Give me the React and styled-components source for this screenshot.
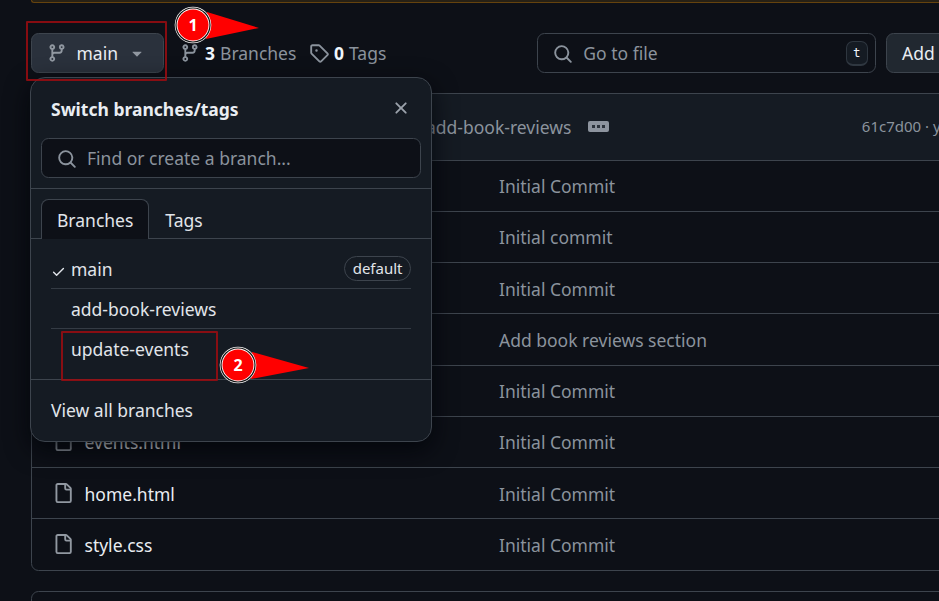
import React from "react";
import styled, { createGlobalStyle } from "styled-components";

const GlobalStyle = createGlobalStyle`
  * { box-sizing: border-box; }
  body {
    margin: 0;
    background: #0d1017;
    overflow: hidden;
  }
`;

const Page = styled.main`
  position: relative;
  width: 939px;
  height: 601px;
  overflow: hidden;
  padding-left: 31px;
  background: #0d1017;
  color: #e9edf2;
  font: 17.5px/26px "Noto Sans", sans-serif;
  white-space: nowrap;
  svg { display: block; flex: none; }
`;

const iconPaths = {
  branch:
    "M9.5 3.25a2.25 2.25 0 1 1 3 2.122V6A2.5 2.5 0 0 1 10 8.5H6a1 1 0 0 0-1 1v1.128a2.251 2.251 0 1 1-1.5 0V5.372a2.25 2.25 0 1 1 1.5 0v1.836A2.493 2.493 0 0 1 6 7h4a1 1 0 0 0 1-1v-.628A2.25 2.25 0 0 1 9.5 3.25Zm-6 0a.75.75 0 1 0 1.5 0 .75.75 0 0 0-1.5 0Zm8.25-.75a.75.75 0 1 0 0 1.5.75.75 0 0 0 0-1.5ZM4.25 12a.75.75 0 1 0 0 1.5.75.75 0 0 0 0-1.5Z",
  search:
    "M10.68 11.74a6 6 0 0 1-7.922-8.982 6 6 0 0 1 8.982 7.922l3.04 3.04a.749.749 0 0 1-.326 1.275.749.749 0 0 1-.734-.215ZM11.5 7a4.499 4.499 0 1 0-8.997 0A4.499 4.499 0 0 0 11.5 7Z",
  tag: "M1 7.775V2.75C1 1.784 1.784 1 2.75 1h5.025c.464 0 .91.184 1.238.513l6.25 6.25a1.75 1.75 0 0 1 0 2.474l-5.026 5.026a1.75 1.75 0 0 1-2.474 0l-6.25-6.25A1.752 1.752 0 0 1 1 7.775Zm1.5 0c0 .066.026.13.073.177l6.25 6.25a.25.25 0 0 0 .354 0l5.025-5.025a.25.25 0 0 0 0-.354l-6.25-6.25a.25.25 0 0 0-.177-.073H2.75a.25.25 0 0 0-.25.25ZM6 5a1 1 0 1 1 0 2 1 1 0 0 1 0-2Z",
  file: "M2 1.75C2 .784 2.784 0 3.75 0h6.586c.464 0 .909.184 1.237.513l2.914 2.914c.329.328.513.773.513 1.237v9.586A1.75 1.75 0 0 1 13.25 16h-9.5A1.75 1.75 0 0 1 2 14.25Zm1.75-.25a.25.25 0 0 0-.25.25v12.5c0 .138.112.25.25.25h9.5a.25.25 0 0 0 .25-.25V6h-2.75A1.75 1.75 0 0 1 9 4.25V1.5Zm6.75.062V4.25c0 .138.112.25.25.25h2.688l-.011-.013-2.914-2.914-.013-.011Z",
  close:
    "M3.72 3.72a.75.75 0 0 1 1.06 0L8 6.94l3.22-3.22a.749.749 0 0 1 1.275.326.749.749 0 0 1-.215.734L9.06 8l3.22 3.22a.749.749 0 0 1-.326 1.275.749.749 0 0 1-.734-.215L8 9.06l-3.22 3.22a.751.751 0 0 1-1.042-.018.751.751 0 0 1-.018-1.042L6.94 8 3.72 4.78a.75.75 0 0 1 0-1.06Z",
  check:
    "M13.78 4.22a.75.75 0 0 1 0 1.06l-7.25 7.25a.75.75 0 0 1-1.06 0L2.22 9.28a.751.751 0 0 1 .018-1.042.751.751 0 0 1 1.042-.018L6 10.94l6.72-6.72a.75.75 0 0 1 1.06 0Z",
  caret:
    "m4.427 7.427 3.396 3.396a.25.25 0 0 0 .354 0l3.396-3.396A.25.25 0 0 0 11.396 7H4.604a.25.25 0 0 0-.177.427Z",
};

function Icon({ name, size = 20 }) {
  return (
    <svg width={size} height={size} viewBox="0 0 16 16" fill="currentColor" aria-hidden="true">
      <path d={iconPaths[name]} />
    </svg>
  );
}

const Banner = styled.div`
  height: 3px;
  background: #272115;
  border: 1px solid #65430e;
  border-top: 0;
  border-right: 0;
  border-bottom-left-radius: 7px;
`;

const Toolbar = styled.div`
  position: relative;
  display: flex;
  align-items: center;
  height: 40px;
  margin-top: 30px;
`;

const Button = styled.button`
  display: flex;
  align-items: center;
  flex: none;
  width: ${(p) => p.$width}px;
  height: 40px;
  margin-left: ${(p) => p.$left || 0}px;
  padding: 0 0 1px 15px;
  border: 1px solid #3d444d;
  border-radius: 7.5px;
  background: ${(p) => (p.$active ? "#2a313c" : "#212830")};
  color: #e9edf2;
  font: inherit;
  text-align: left;
  svg { color: #9198a1; margin-top: 1px; }
`;

const ButtonLabel = styled.span`
  width: 50.5px;
  margin-left: 9.5px;
`;

const Counter = styled.a`
  display: flex;
  align-items: center;
  flex: none;
  width: ${(p) => p.$width}px;
  margin: -1px 0 0 ${(p) => p.$gap}px;
  color: #8b939d;
  b {
    margin: 0 5px;
    color: #f0f6fc;
    font-weight: 700;
  }
`;

const SearchField = styled.div`
  display: flex;
  align-items: center;
  gap: 10px;
  flex: none;
  width: ${(p) => p.$width}px;
  height: 40px;
  margin-left: ${(p) => p.$left}px;
  padding: 0 7px 1px 15px;
  border: 1px solid #3d444d;
  border-radius: 7.5px;
  background: #0d1017;
  color: #8b939d;
  svg { margin-top: 2px; }
`;

const KeyHint = styled.kbd`
  display: grid;
  place-items: center;
  width: 22px;
  height: 25px;
  margin: 2px 0 0 auto;
  border: 1px solid #2f3740;
  border-bottom-width: 2px;
  border-radius: 7px;
  background: #151b23;
  color: #f0f6fc;
  font: 12.5px/12px "DejaVu Sans Mono", monospace;
`;

const FileTable = styled.section`
  width: 1100px;
  height: 478px;
  margin-top: 20px;
  border: 1px solid #3d444d;
  border-radius: 7.5px;
  overflow: hidden;
`;

const CommitHeader = styled.header`
  display: flex;
  align-items: center;
  height: 65.5px;
  padding-left: 394px;
  padding-top: 1px;
  background: #151b23;
  color: #8b939d;
`;

const Ellipsis = styled.span`
  display: flex;
  align-items: center;
  justify-content: center;
  gap: 2px;
  width: 21px;
  height: 11px;
  margin: -1px 0 0 17px;
  border-radius: 2px;
  background: #8d949e;
  i {
    width: 3px;
    height: 3px;
    background: #2b323b;
  }
`;

const CommitHash = styled.span`
  margin: -3px 0 0 252.5px;
  font-size: 15px;
`;

const FileRow = styled.div`
  display: grid;
  grid-template-columns: 467px 1fr;
  align-items: center;
  height: 51.25px;
  padding-top: 1px;
  border-top: 1px solid #3d444d;
`;

const FileName = styled.span`
  display: flex;
  align-items: center;
  gap: 12px;
  padding-left: 20.5px;
  svg { color: #9198a1; margin-top: -2px; }
`;

const CommitMessage = styled.span`
  color: #8b939d;
`;

const NextPanel = styled.section`
  width: 1100px;
  height: 60px;
  margin-top: 20px;
  border: 1px solid #3d444d;
  border-radius: 7.5px;
`;

const Menu = styled.div`
  position: absolute;
  z-index: 1;
  top: 44px;
  left: -1px;
  width: 402px;
  height: 364.5px;
  border: 1px solid #3d444d;
  border-radius: 15px;
  background: #151b23;
  box-shadow: 0 8px 24px rgba(1, 4, 9, 0.8);
`;

const MenuHeader = styled.div`
  display: flex;
  align-items: center;
  justify-content: space-between;
  height: 60px;
  padding: 1px 20px 0 20px;
  font-weight: 700;
  svg { color: #9ba2ab; margin-top: -1px; }
`;

const MenuSearch = styled.div`
  height: 51px;
  border-bottom: 1px solid #3d444d;
`;

const TabStrip = styled.div`
  display: flex;
  height: 50px;
  padding: 10px 0 0 10px;
  border-bottom: 1px solid #3d444d;
`;

const Tab = styled.button`
  height: 40px;
  padding: 0 15px;
  border: 1px solid ${(p) => (p.$selected ? "#3d444d" : "transparent")};
  border-bottom: 0;
  border-radius: 7.5px 7.5px 0 0;
  background: ${(p) => (p.$selected ? "#0d1017" : "transparent")};
  color: #e1e5ea;
  font: inherit;
`;

const BranchList = styled.div`
  height: 141px;
  padding: 10px 20px 0;
  border-bottom: 1px solid #3d444d;
`;

const Branch = styled.div`
  display: grid;
  grid-template-columns: 20px 1fr auto;
  align-items: center;
  height: 40px;
  border-bottom: 1px solid ${(p) => (p.$last ? "transparent" : "#343b44")};
  color: #e1e5ea;
  svg { margin-top: 5px; }
`;

const DefaultTag = styled.span`
  height: 25px;
  padding: 0 7.5px;
  border: 1px solid #3d444d;
  border-radius: 13px;
  font-size: 15px;
  line-height: 22px;
`;

const MenuFooter = styled.a`
  display: flex;
  align-items: center;
  height: 60px;
  padding-left: 20px;
  color: #e1e5ea;
`;

const Highlight = styled.div`
  position: absolute;
  z-index: 2;
  top: ${(p) => p.$y}px;
  left: ${(p) => p.$x}px;
  width: ${(p) => p.$w}px;
  height: ${(p) => p.$h}px;
  border: 2px solid rgba(158, 12, 16, 0.85);
  border-radius: 1px;
`;

const Marker = styled.div`
  position: absolute;
  z-index: 3;
  top: ${(p) => p.$y}px;
  left: ${(p) => p.$x}px;
  width: 92px;
  height: 38px;
`;

function StepMarker({ number, x, y, tip }) {
  return (
    <Marker $x={x} $y={y}>
      <svg width="92" height="38" viewBox="0 0 92 38">
        <path d={`M33 6 ${tip} 22 32 33Z`} fill="#f00" />
        <circle cx="19" cy="19" r="18.3" fill="#fff" />
        <circle cx="19" cy="19" r="17" fill="#fff" stroke="#111" strokeWidth="1.2" />
        <circle cx="19" cy="19" r="15.5" fill="#f00" />
        <text
          x="19"
          y="24.5"
          fill="#fff"
          fontFamily="Open Sans, sans-serif"
          fontSize="16"
          fontWeight="700"
          textAnchor="middle"
        >
          {number}
        </text>
      </svg>
    </Marker>
  );
}

const files = [
  { message: "Initial Commit" },
  { message: "Initial commit" },
  { message: "Initial Commit" },
  { message: "Add book reviews section" },
  { message: "Initial Commit" },
  { name: "events.html", message: "Initial Commit" },
  { name: "home.html", message: "Initial Commit" },
  { name: "style.css", message: "Initial Commit" },
];

const branches = ["main", "add-book-reviews", "update-events"];

function BranchMenu() {
  return (
    <Menu>
      <MenuHeader>
        Switch branches/tags
        <Icon name="close" />
      </MenuHeader>
      <MenuSearch>
        <SearchField $width={380} $left={10}>
          <Icon name="search" />
          Find or create a branch...
        </SearchField>
      </MenuSearch>
      <TabStrip>
        <Tab $selected>Branches</Tab>
        <Tab>Tags</Tab>
      </TabStrip>
      <BranchList>
        {branches.map((name, i) => (
          <Branch key={name} $last={i === branches.length - 1}>
            <span>{i === 0 && <Icon name="check" size={15} />}</span>
            {name}
            {i === 0 && <DefaultTag>default</DefaultTag>}
          </Branch>
        ))}
      </BranchList>
      <MenuFooter>View all branches</MenuFooter>
    </Menu>
  );
}

export default function App() {
  return (
    <>
      <GlobalStyle />
      <Page>
        <Banner />
        <Toolbar>
          <Button $width={133} $active>
            <Icon name="branch" />
            <ButtonLabel>main</ButtonLabel>
            <Icon name="caret" />
          </Button>
          <Counter $width={117} $gap={16}>
            <Icon name="branch" />
            <b>3</b>Branches
          </Counter>
          <Counter $width={77} $gap={12}>
            <Icon name="tag" />
            <b>0</b>Tags
          </Counter>
          <SearchField $width={338.5} $left={151.3}>
            <Icon name="search" />
            Go to file
            <KeyHint>t</KeyHint>
          </SearchField>
          <Button $width={120} $left={10.2}>Add</Button>
          <BranchMenu />
        </Toolbar>
        <FileTable>
          <CommitHeader>
            add-book-reviews
            <Ellipsis><i /><i /><i /></Ellipsis>
            <CommitHash>61c7d00 · y</CommitHash>
          </CommitHeader>
          {files.map((file, i) => (
            <FileRow key={i}>
              <FileName>
                {file.name && <Icon name="file" />}
                {file.name}
              </FileName>
              <CommitMessage>{file.message}</CommitMessage>
            </FileRow>
          ))}
        </FileTable>
        <NextPanel />
        <Highlight $x={26} $y={21} $w={141} $h={60} />
        <Highlight $x={61} $y={331} $w={157} $h={50} />
        <StepMarker number="1" x={174} y={6} tip={85} />
        <StepMarker number="2" x={219} y={346} tip={90} />
      </Page>
    </>
  );
}
